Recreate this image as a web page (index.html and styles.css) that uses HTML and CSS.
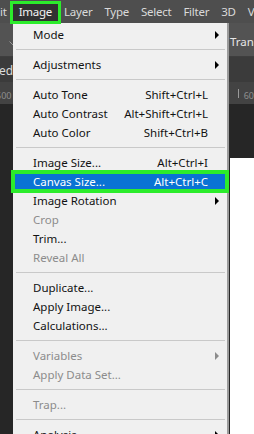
FILE: index.html
```html
<!DOCTYPE html>
<html>
<head>
  <title>Image Menu</title>
  <link rel="stylesheet" href="styles.css">
</head>
<body>
  <div class="app">
    <div class="menubar">
      <span class="mb-item first">it</span>
      <span class="mb-item active">Image</span>
      <span class="mb-item">Layer</span>
      <span class="mb-item">Type</span>
      <span class="mb-item">Select</span>
      <span class="mb-item">Filter</span>
      <span class="mb-item">3D</span>
      <span class="mb-item">V</span>
    </div>

    <div class="options">
      <span class="chev">
        <svg width="8" height="5" viewBox="0 0 8 5"><path d="M0.5 0.5 L4 4 L7.5 0.5" fill="none" stroke="#9a9a9a" stroke-width="1"/></svg>
      </span>
      <span class="opt-label">Trans</span>
    </div>

    <div class="tabs">
      <span class="tab">led</span>
    </div>

    <div class="ruler">
      <span class="ruler-num">500</span>
      <span class="ruler-right"><i class="tick"></i><span class="ruler-num">60</span></span>
    </div>

    <div class="work">
      <div class="doc"></div>
    </div>

    <!-- Image dropdown -->
    <div class="menu">
      <div class="item">Mode<span class="arrow"></span></div>
      <div class="sep"></div>
      <div class="item">Adjustments<span class="arrow"></span></div>
      <div class="sep"></div>
      <div class="item">Auto Tone<span class="key">Shift+Ctrl+L</span></div>
      <div class="item">Auto Contrast<span class="key">Alt+Shift+Ctrl+L</span></div>
      <div class="item">Auto Color<span class="key">Shift+Ctrl+B</span></div>
      <div class="sep"></div>
      <div class="item">Image Size...<span class="key">Alt+Ctrl+I</span></div>
      <div class="item selected">Canvas Size...<span class="key">Alt+Ctrl+C</span></div>
      <div class="item">Image Rotation<span class="arrow"></span></div>
      <div class="item disabled">Crop</div>
      <div class="item">Trim...</div>
      <div class="item disabled">Reveal All</div>
      <div class="sep"></div>
      <div class="item">Duplicate...</div>
      <div class="item">Apply Image...</div>
      <div class="item">Calculations...</div>
      <div class="sep"></div>
      <div class="item disabled">Variables<span class="arrow"></span></div>
      <div class="item disabled">Apply Data Set...</div>
      <div class="sep"></div>
      <div class="item disabled">Trap...</div>
      <div class="sep"></div>
      <div class="item">Analysis<span class="arrow"></span></div>
    </div>
  </div>
</body>
</html>
```

FILE: styles.css
```css
body {
  margin: 0;
  font-family: 'Noto Sans', 'Segoe UI', sans-serif;
  background-color: #282828;
  overflow: hidden;
}

.app {
  position: relative;
  width: 254px;
  height: 434px;
  display: flex;
  flex-direction: column;
  overflow: hidden;
}

/* top menu bar */
.menubar {
  height: 23px;
  flex: none;
  display: flex;
  align-items: flex-start;
  background-color: #4e4e4e;
  white-space: nowrap;
}

.mb-item {
  margin-top: 4px;
  height: 17px;
  line-height: 16px;
  padding: 0 6px;
  font-size: 11.5px;
  letter-spacing: -0.25px;
  color: #dadada;
}

.mb-item.first {
  padding-left: 0;
}

.mb-item.active {
  position: relative;
  z-index: 3;
  background-color: #323232;
  color: #f2f2f2;
  outline: 3px solid #2cec2c;
}

/* options bar */
.options {
  height: 33px;
  flex: none;
  display: flex;
  align-items: center;
  justify-content: space-between;
  background-color: #535353;
  border-bottom: 1px solid #3e3e3e;
}

.chev {
  display: flex;
  margin-left: 9px;
  margin-top: 8px;
}

.opt-label {
  margin-top: 4px;
  padding-left: 3px;
  width: 24px;
  overflow: hidden;
  font-size: 11.5px;
  color: #e6e6e6;
  border-left: 1px solid #474747;
}

/* document tabs */
.tabs {
  height: 25px;
  flex: none;
  display: flex;
  align-items: center;
  background-color: #3b3b3b;
}

.tab {
  margin-left: -4px;
  padding-top: 2px;
  font-size: 12px;
  color: #dcdcdc;
}

/* ruler */
.ruler {
  height: 22px;
  flex: none;
  display: flex;
  justify-content: space-between;
  align-items: center;
  background-color: #434343;
}

.ruler-num {
  font-size: 9px;
  color: #8e8e8e;
  margin-left: -4px;
  padding-top: 4px;
}

.ruler-right {
  display: flex;
  align-items: center;
  gap: 9px;
}

.tick {
  width: 1px;
  height: 9px;
  background-color: #9a9a9a;
}

/* workspace */
.work {
  flex: 1;
  display: flex;
  justify-content: flex-end;
  align-items: flex-start;
  background-color: #262626;
}

.doc {
  width: 24px;
  height: 280px;
  margin-top: 54px;
  background-color: #ffffff;
}

/* dropdown menu */
.menu {
  position: absolute;
  left: 13px;
  top: 23px;
  width: 214px;
  padding-top: 2px;
  background-color: #f0f0f0;
  border-right: 2px solid #9b9b9b;
  z-index: 2;
  font-size: 11.5px;
  color: #121212;
}

.item {
  height: 19px;
  line-height: 19px;
  display: flex;
  align-items: center;
  justify-content: space-between;
  padding: 0 19px 0 20px;
  white-space: nowrap;
}

.item.disabled {
  color: #8c8c8c;
}

.item.selected {
  position: relative;
  z-index: 3;
  background-color: #0a73d4;
  color: #ffffff;
  outline: 4px solid #2cec2c;
  outline-offset: -2px;
}

.key {
  text-align: right;
}

.arrow {
  width: 0;
  height: 0;
  margin-right: -11px;
  border-top: 4px solid transparent;
  border-bottom: 4px solid transparent;
  border-left: 4px solid #000000;
}

.item.disabled .arrow {
  border-left-color: #8c8c8c;
}

.sep {
  height: 11px;
  display: flex;
  align-items: center;
  padding: 0 2px 0 3px;
}

.sep::after {
  content: "";
  flex: 1;
  height: 1px;
  background-color: #c9c9c9;
}
```
